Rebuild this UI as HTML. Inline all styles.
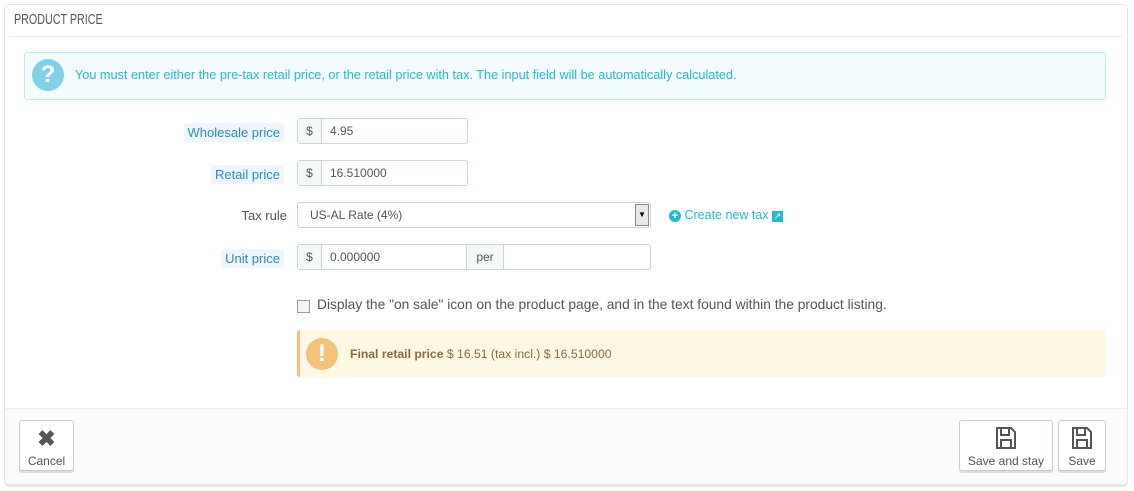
<!DOCTYPE html>
<html><head><style>
*{box-sizing:border-box}
body{margin:0;width:1134px;height:491px;background:#fff;font-family:"Liberation Sans",sans-serif;font-size:12px;color:#555;position:relative;overflow:hidden}
.a{position:absolute}
.panel{left:4px;top:4px;width:1124px;height:481px;border:1px solid #e6e6e6;border-radius:5px;box-shadow:0 2px 0 #e6e6e6}
.lbl{right:850px;height:19px;line-height:19px;padding:0 4px;background:#eef6fb;color:#2a8ec0;border-radius:3px;font-size:13px}
.inp{border:1px solid #c7d6db;border-radius:3px;height:26px;background:#fff;line-height:24px;font-size:12px;color:#555}
.add{background:#f5f8f9;border-right:1px solid #c7d6db;width:24px;text-align:center;height:100%;float:left}
.btn{border:1px solid #ccc;border-radius:3px;background:#fff;box-shadow:0 2px 0 #ddd;text-align:center;font-size:12px;color:#555}
</style></head><body>
<div class="a panel"></div>
<div class="a" style="left:14px;top:12px;font-size:14.5px;color:#555;transform:scaleX(.74);transform-origin:left">PRODUCT PRICE</div>
<div class="a" style="left:9px;top:36px;width:1114px;border-top:1px solid #eee"></div>
<div class="a" style="left:24px;top:52px;width:1082px;height:48px;background:#f4fbfe;border:1px solid #bde9f5;border-radius:3px"></div>
<div class="a" style="left:32px;top:59px;width:32px;height:32px;border-radius:50%;background:#81cfe8;color:#fff;font-weight:bold;font-size:24px;text-align:center;line-height:32px">?</div>
<div class="a" style="left:75px;top:68px;color:#25b9d7;font-size:12.7px">You must enter either the pre-tax retail price, or the retail price with tax. The input field will be automatically calculated.</div>

<div class="a lbl" style="top:123px">Wholesale price</div>
<div class="a inp" style="left:297px;top:118px;width:171px"><span class="add">$</span><span style="padding-left:8px">4.95</span></div>
<div class="a lbl" style="top:165px">Retail price</div>
<div class="a inp" style="left:297px;top:160px;width:171px"><span class="add">$</span><span style="padding-left:8px">16.510000</span></div>
<div class="a" style="right:847px;top:208px;font-size:13px">Tax rule</div>
<div class="a inp" style="left:297px;top:202px;width:354px;padding-left:12px">US-AL Rate (4%)<span class="a" style="right:1px;top:1px;width:14px;height:22px;border:1px solid #888;background:#e8e8e8;font-size:8px;text-align:center;line-height:20px;color:#000">▼</span></div>
<div class="a" style="left:669px;top:208px;color:#25b9d7;font-size:12.5px"><span style="display:inline-block;width:12px;height:12px;border-radius:50%;background:#25b9d7;color:#fff;font-weight:bold;font-size:11px;line-height:12px;text-align:center">+</span> Create new tax <span style="display:inline-block;width:11px;height:11px;background:#25b9d7;color:#fff;font-size:9px;line-height:11px;text-align:center">↗</span></div>
<div class="a lbl" style="top:249px">Unit price</div>
<div class="a inp" style="left:297px;top:244px;width:354px"><span class="add">$</span><span style="padding-left:8px">0.000000</span>
<span class="a" style="left:168px;top:0;width:38px;height:24px;background:#f5f8f9;border-left:1px solid #c7d6db;border-right:1px solid #c7d6db;text-align:center">per</span></div>
<div class="a" style="left:297px;top:300px;width:13px;height:13px;border:1px solid #999;background:#f3f3f3"></div>
<div class="a" style="left:317px;top:297px;font-size:13.8px">Display the "on sale" icon on the product page, and in the text found within the product listing.</div>
<div class="a" style="left:297px;top:330px;width:809px;height:47px;background:#fcf8e3;border-left:3px solid #f5c27b;border-radius:3px"></div>
<div class="a" style="left:306px;top:338px;width:32px;height:32px;border-radius:50%;background:#f5c27b;color:#fff;font-weight:bold;font-size:24px;text-align:center;line-height:32px">!</div>
<div class="a" style="left:350px;top:347px;color:#8a6d3b;font-size:12.2px"><b>Final retail price</b> $ 16.51 (tax incl.) $ 16.510000</div>

<div class="a" style="left:5px;top:408px;width:1122px;height:76px;background:#fafbfc;border-top:1px solid #eee;border-radius:0 0 5px 5px"></div>
<div class="a btn" style="left:19px;top:420px;width:55px;height:51px"><div style="font-size:22px;font-weight:bold;margin-top:6px;line-height:24px">✖</div><div style="margin-top:3px">Cancel</div></div>
<div class="a btn" style="left:959px;top:420px;width:94px;height:51px"><svg width="26" height="26" viewBox="0 0 26 26" style="margin-top:4px"><path d="M4 3h14l4 4v16H4z M8 3v7h8V3 M8 15h10v8H8z" fill="none" stroke="#555" stroke-width="2"/></svg><div>Save and stay</div></div>
<div class="a btn" style="left:1058px;top:420px;width:48px;height:51px"><svg width="26" height="26" viewBox="0 0 26 26" style="margin-top:4px"><path d="M4 3h14l4 4v16H4z M8 3v7h8V3 M8 15h10v8H8z" fill="none" stroke="#555" stroke-width="2"/></svg><div>Save</div></div>
</body></html>
